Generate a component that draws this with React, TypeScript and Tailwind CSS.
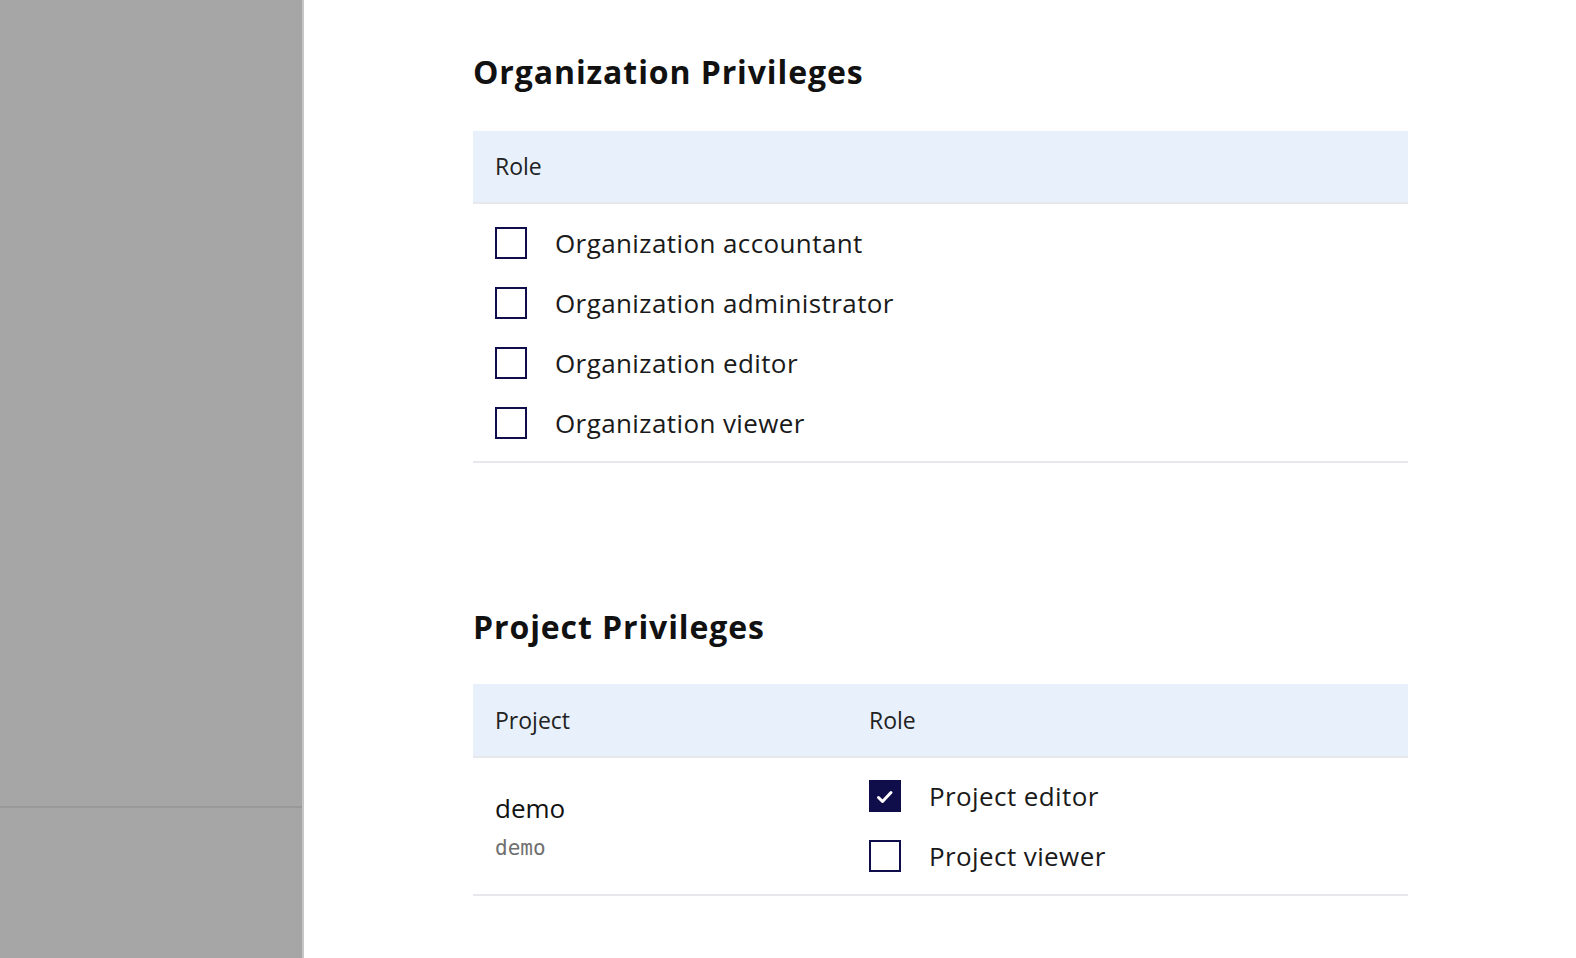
import React from "react";

const FONT = { fontFamily: "'Open Sans', 'Noto Sans', sans-serif" };

function Checkbox({ checked = false }: { checked?: boolean }) {
  return (
    <span
      className={
        "flex size-8 shrink-0 items-center justify-center border-2 border-[#100d4b] " +
        (checked ? "bg-[#100d4b]" : "bg-white")
      }
    >
      {checked && (
        <svg viewBox="2 2 28 28" className="size-[28px]" fill="none">
          <path d="M9.5 17.5l4 4 8.5-9" stroke="#fff" strokeWidth="3" strokeLinecap="round" strokeLinejoin="round" />
        </svg>
      )}
    </span>
  );
}

function RoleRow({ label, checked }: { label: string; checked?: boolean }) {
  return (
    <label className="flex h-[60px] items-center gap-[28px]">
      <Checkbox checked={checked} />
      <span className="text-[26px] tracking-[0.4px] text-[#1a1a1a]">{label}</span>
    </label>
  );
}

const orgRoles = [
  "Organization accountant",
  "Organization administrator",
  "Organization editor",
  "Organization viewer",
];

export default function App() {
  return (
    <div className="flex min-h-[958px] w-full bg-white" style={FONT}>
      <aside className="flex w-[304px] shrink-0 flex-col border-r-2 border-[#c6c6c6] bg-[#a6a6a6]">
        <div className="h-[806px]" />
        <div className="h-[2px] bg-[#999999]" />
        <div className="flex-1" />
      </aside>

      <main className="flex-1 pl-[169px] pt-[54px]">
        <div className="w-[935px]">
          <h2 className="text-[32px] font-bold leading-[36px] tracking-[0.9px] text-[#111]">Organization Privileges</h2>

          <div className="mt-[41px]">
            <div className="flex h-[73px] items-center border-b-2 border-[#e6e8eb] bg-[#e8f1fb] px-[22px] text-[23px] text-[#222]">
              Role
            </div>
            <div className="border-b-2 border-[#e6e8eb] px-[22px] pb-[8px] pt-[9px]">
              {orgRoles.map((r) => (
                <RoleRow key={r} label={r} />
              ))}
            </div>
          </div>

          <h2 className="mt-[146px] text-[32px] font-bold leading-[36px] tracking-[0.9px] text-[#111]">Project Privileges</h2>

          <div className="mt-[39px]">
            <div className="grid h-[74px] grid-cols-[396px_1fr] items-center border-b-2 border-[#e6e8eb] bg-[#e8f1fb] text-[23px] text-[#222]">
              <div className="pl-[22px]">Project</div>
              <div>Role</div>
            </div>
            <div className="grid grid-cols-[396px_1fr] border-b-2 border-[#e6e8eb] py-2">
              <div className="flex flex-col justify-center pl-[22px]">
                <span className="text-[26px] leading-[36px] text-[#111]">demo</span>
                <span className="mt-2 text-[21px] leading-[28px] text-[#707070]" style={{ fontFamily: "'DejaVu Sans Mono', monospace" }}>
                  demo
                </span>
              </div>
              <div>
                <RoleRow label="Project editor" checked />
                <RoleRow label="Project viewer" />
              </div>
            </div>
          </div>
        </div>
      </main>
    </div>
  );
}
